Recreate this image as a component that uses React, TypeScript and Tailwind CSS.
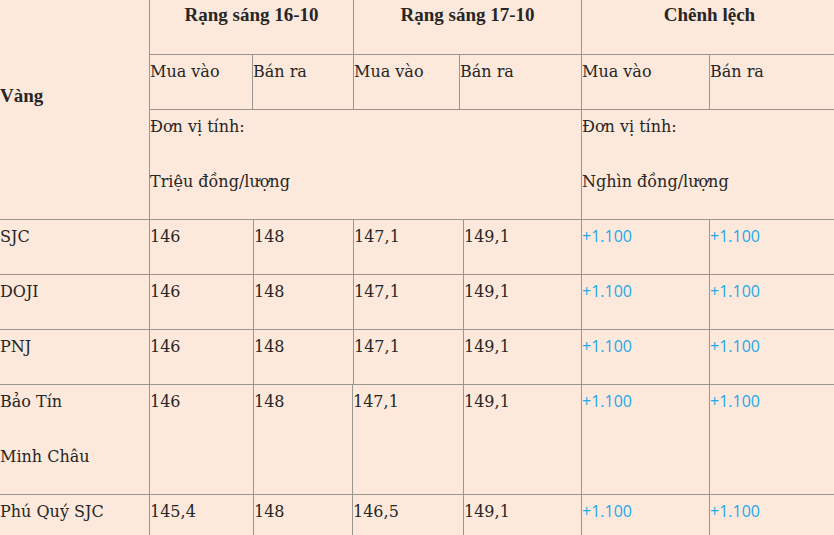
import React from 'react';

type Row = {
  name: string[];
  values: string[];
  diff: string[];
  widths: number[];
};

const fullWidths = [150, 104, 100, 110, 118, 128, 128];
const shiftedWidths = [150, 104, 99, 111, 118, 128, 128];

const rows: Row[] = [
  { name: ['SJC'], values: ['146', '148', '147,1', '149,1'], diff: ['+1.100', '+1.100'], widths: fullWidths },
  { name: ['DOJI'], values: ['146', '148', '147,1', '149,1'], diff: ['+1.100', '+1.100'], widths: fullWidths },
  { name: ['PNJ'], values: ['146', '148', '147,1', '149,1'], diff: ['+1.100', '+1.100'], widths: fullWidths },
  { name: ['Bảo Tín', 'Minh Châu'], values: ['146', '148', '147,1', '149,1'], diff: ['+1.100', '+1.100'], widths: shiftedWidths },
  { name: ['Phú Quý SJC'], values: ['145,4', '148', '146,5', '149,1'], diff: ['+1.100', '+1.100'], widths: shiftedWidths },
];

const serif = "font-['DejaVu_Serif',serif] text-[16px] leading-[27px] text-[#262626]";
const bold = "font-['Liberation_Serif',serif] font-bold text-[19px] leading-[27px] text-[#262626]";
const blue = "font-['Open_Sans',sans-serif] text-[16px] leading-[27px] text-[#1fa8e8]";
const cell = 'shrink-0 border-r border-b border-[#9b958f] pt-[3px]';

// each text line takes 27px, paragraphs are 55px apart
const Lines: React.FC<{ lines: string[] }> = ({ lines }) => (
  <div className="flex flex-col gap-[28px]">
    {lines.map((l, i) => (
      <div key={i} className="h-[27px] whitespace-nowrap">{l}</div>
    ))}
  </div>
);

export default function App() {
  return (
    <div className="w-[834px] h-[535px] overflow-hidden bg-[#fde9db]">
      <div className="w-[838px]">
        {/* Header */}
        <div className="flex">
          <div className={`w-[150px] h-[220px] shrink-0 border-r border-b border-[#9b958f] flex items-center pb-[28px] ${bold}`}>
            Vàng
          </div>
          <div className="flex flex-col">
            <div className={`flex h-[55px] ${bold}`}>
              <div className={`${cell} !pt-[1px] w-[204px] text-center`}>Rạng sáng 16-10</div>
              <div className={`${cell} !pt-[1px] w-[228px] text-center`}>Rạng sáng 17-10</div>
              <div className={`${cell} !pt-[1px] w-[256px] text-center`}>Chênh lệch</div>
            </div>
            <div className={`flex h-[55px] ${serif}`}>
              <div className={`${cell} w-[103px]`}>Mua vào</div>
              <div className={`${cell} w-[101px]`}>Bán ra</div>
              <div className={`${cell} w-[106px]`}>Mua vào</div>
              <div className={`${cell} w-[122px]`}>Bán ra</div>
              <div className={`${cell} w-[128px]`}>Mua vào</div>
              <div className={`${cell} w-[128px]`}>Bán ra</div>
            </div>
            <div className={`flex h-[110px] ${serif}`}>
              <div className={`${cell} w-[432px]`}>
                <Lines lines={['Đơn vị tính:', 'Triệu đồng/lượng']} />
              </div>
              <div className={`${cell} w-[256px]`}>
                <Lines lines={['Đơn vị tính:', 'Nghìn đồng/lượng']} />
              </div>
            </div>
          </div>
        </div>

        {/* Data rows */}
        {rows.map((r) => {
          const h = r.name.length > 1 ? 'h-[110px]' : 'h-[55px]';
          return (
            <div key={r.name.join(' ')} className={`flex ${h}`}>
              <div className={`${cell} ${serif}`} style={{ width: r.widths[0] }}>
                <Lines lines={r.name} />
              </div>
              {r.values.map((v, i) => (
                <div key={i} className={`${cell} ${serif}`} style={{ width: r.widths[i + 1] }}>
                  {v}
                </div>
              ))}
              {r.diff.map((v, i) => (
                <div key={i} className={`${cell} ${blue}`} style={{ width: r.widths[i + 5] }}>
                  {v}
                </div>
              ))}
            </div>
          );
        })}
      </div>
    </div>
  );
}
